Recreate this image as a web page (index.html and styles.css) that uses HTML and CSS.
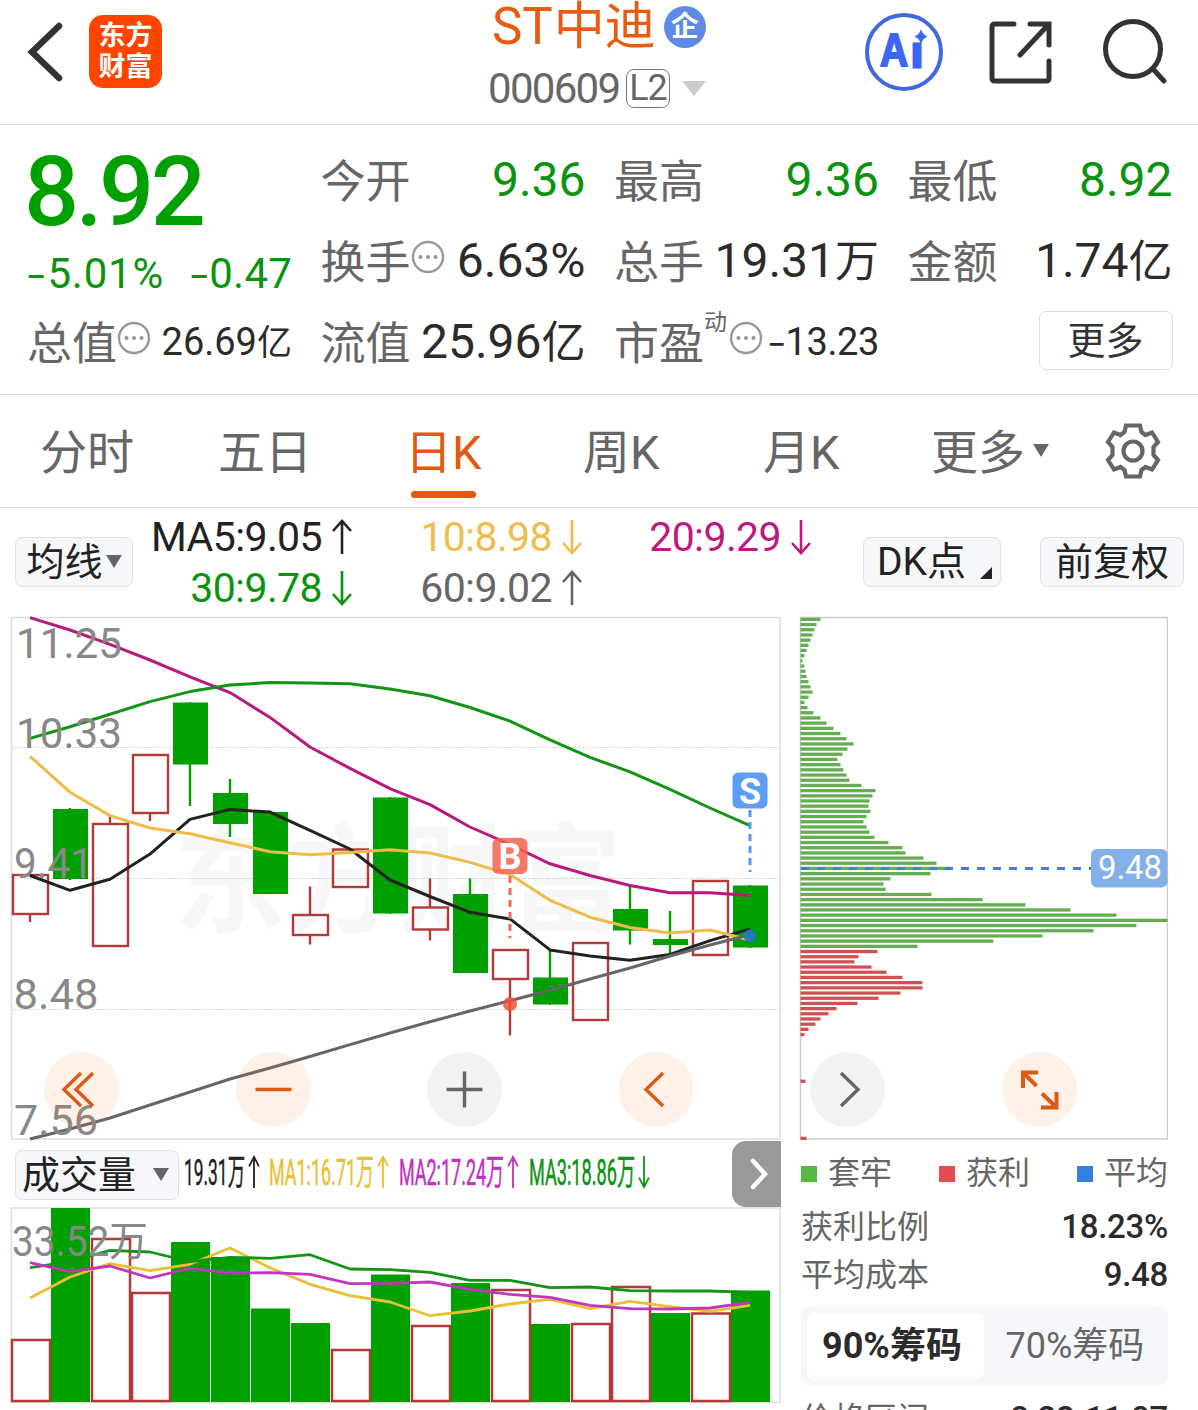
FILE: index.html
```
<!DOCTYPE html>
<html lang="zh-CN">
<head>
	<meta charset="utf-8">
	<title>ST中迪 000609</title>
	<link rel="stylesheet" href="styles.css">
</head>
<body>

<svg class="defs">
	<symbol id="up" viewBox="0 0 22 36" preserveAspectRatio="none"><path d="M11 35V2M2 12L11 2L20 12" vector-effect="non-scaling-stroke" /></symbol>
	<symbol id="down" viewBox="0 0 22 36" preserveAspectRatio="none"><path d="M11 1V34M2 24L11 34L20 24" vector-effect="non-scaling-stroke" /></symbol>
	<symbol id="dots" viewBox="0 0 34 34">
		<circle cx="17" cy="17" r="15" fill="none" stroke="#999" stroke-width="2.4" />
		<circle cx="9.5" cy="17" r="2.1" fill="#999" /><circle cx="17" cy="17" r="2.1" fill="#999" /><circle cx="24.5" cy="17" r="2.1" fill="#999" />
	</symbol>
</svg>

<header class="header">
	<svg class="back" width="40" height="64" viewBox="0 0 40 64"><path d="M35 8L8 34L35 60" /></svg>
	<div class="logo"><span>东方</span><span>财富</span></div>
	<div class="title">
		<div class="name"><span>ST<em>中迪</em></span><i class="qi">企</i></div>
		<div class="code"><span class="num">000609</span><span class="l2">L2</span><i class="tri"></i></div>
	</div>
	<div class="tools">
		<svg width="80" height="80" viewBox="0 0 80 80">
			<circle cx="40" cy="40" r="37" fill="none" stroke="#4068e0" stroke-width="4" />
			<text class="ai" x="16" y="54" textLength="28" lengthAdjust="spacingAndGlyphs">A</text>
			<text class="ai dotless" x="47" y="55">ı</text>
			<path d="M57 17Q58.500 22.500 63.500 24.500Q58.500 26.500 57 32Q55.500 26.500 50.500 24.500Q55.500 22.500 57 17Z" fill="#3a66f5" />
		</svg>
		<svg class="line" width="66" height="66" viewBox="0 0 66 66"><path d="M27 6H8Q5 6 5 9V60Q5 63 8 63H59Q62 63 62 60V43M43 6H62V27M61 7L33 37" /></svg>
		<svg class="line" width="68" height="68" viewBox="0 0 68 68"><circle cx="32" cy="32" r="27.500" /><path d="M52 52L63 64" /></svg>
	</div>
</header>

<section class="quote">
	<div class="col first">
		<div class="price">8.92</div>
		<div class="change"><span><b>-</b>5.01%</span><span><b>-</b>0.47</span></div>
		<div class="item small"><label>总值</label><svg class="dots"><use href="#dots" /></svg><span>26.69<em>亿</em></span></div>
	</div>
	<div class="col">
		<div class="item"><label>今开</label><span class="green">9.36</span></div>
		<div class="item"><label>换手</label><svg class="dots"><use href="#dots" /></svg><span>6.63%</span></div>
		<div class="item"><label>流值</label><span>25.96<em>亿</em></span></div>
	</div>
	<div class="col">
		<div class="item"><label>最高</label><span class="green">9.36</span></div>
		<div class="item"><label>总手</label><span>19.31<em>万</em></span></div>
		<div class="item small"><label>市盈</label><sup>动</sup><svg class="dots"><use href="#dots" /></svg><span class="pe"><b>-</b>13.23</span></div>
	</div>
	<div class="col">
		<div class="item"><label>最低</label><span class="green">8.92</span></div>
		<div class="item"><label>金额</label><span>1.74<em>亿</em></span></div>
		<div class="item last"><button class="more">更多</button></div>
	</div>
</section>

<nav class="tabs">
	<a>分时</a>
	<a>五日</a>
	<a class="on">日K</a>
	<a>周K</a>
	<a>月K</a>
	<a>更多<i class="tri"></i></a>
	<svg width="58" height="58" viewBox="0 0 58 58">
		<path d="M22 3.500H36L37.500 10L41.500 13L48 10.500L54 20L49.500 25V33L54 38L48 47.500L41.500 45L37.500 48L36 54.500H22L20.500 48L16.500 45L10 47.500L4 38L8.500 33V25L4 20L10 10.500L16.500 13L20.500 10Z" />
		<circle cx="29" cy="29" r="9.500" />
	</svg>
</nav>

<section class="ma">
	<button class="btn">均线<i class="tri"></i></button>
	<div class="values">
		<div class="black"><span>MA5:9.05</span><svg><use href="#up" /></svg></div>
		<div class="yellow"><span>10:8.98</span><svg><use href="#down" /></svg></div>
		<div class="pink"><span>20:9.29</span><svg><use href="#down" /></svg></div>
		<div class="green"><span>30:9.78</span><svg><use href="#down" /></svg></div>
		<div class="gray"><span>60:9.02</span><svg><use href="#up" /></svg></div>
	</div>
	<button class="btn dk">DK点<i class="corner"></i></button>
	<button class="btn">前复权</button>
</section>

<main class="main">
	<div class="left">
		<div class="kline">
			<svg id="kline" width="790" height="531" viewBox="0 0 790 531"></svg>
			<div class="ctrl">
				<svg viewBox="0 0 75 75"><path d="M37 21L20 37.500L37 54M49 21L32 37.500L49 54" /></svg>
				<svg viewBox="0 0 75 75"><path d="M19.500 37.500H55.500" /></svg>
				<svg class="dim" viewBox="0 0 75 75"><path d="M19.500 37.500H55.500M37.500 19.500V55.500" /></svg>
				<svg viewBox="0 0 75 75"><path d="M44 21L27 37.500L44 54" /></svg>
			</div>
		</div>
		<div class="volbar">
			<button class="btn">成交量<i class="tri"></i></button>
			<svg width="480" height="60" viewBox="180 1143 480 60" id="voltext"></svg>
			<div class="next"><svg width="20" height="32" viewBox="0 0 20 32"><path d="M4 3L16 16L4 29" /></svg></div>
		</div>
		<svg id="vol" width="790" height="203" viewBox="0 67 790 203"></svg>
	</div>
	<div class="right">
		<div class="chips">
			<svg id="chips" width="378" height="531" viewBox="0 0 378 531"></svg>
			<div class="ctrl">
				<svg class="dim" viewBox="0 0 75 75"><path d="M31 21L48 37.500L31 54" /></svg>
				<svg class="expand" viewBox="0 0 75 75"><path d="M36 20.500H21V36M21 20.500L34.500 34M40 41.500L54.500 55.500M54.500 40V55.500H39" /></svg>
			</div>
		</div>
		<div class="legend">
			<span><i class="g"></i>套牢</span>
			<span><i class="r"></i>获利</span>
			<span><i class="b"></i>平均</span>
		</div>
		<div class="row"><span>获利比例</span><strong>18.23%</strong></div>
		<div class="row"><span>平均成本</span><strong>9.48</strong></div>
		<div class="switch"><a class="on">90%筹码</a><a>70%筹码</a></div>
		<div class="row range"><span>价格区间</span><strong>8.22-11.07</strong></div>
	</div>
</main>

<script src="script.js"></script>
</body>
</html>
```
FILE: styles.css
```
* {
	box-sizing: border-box;
}
body {
	margin: 0;
	width: 1198px;
	height: 1410px;
	overflow: hidden;
	background: #fff;
	color: #333;
	font-family: Roboto, "Noto Sans CJK SC", sans-serif;
	white-space: nowrap;
}
i, em {
	font-style: normal;
}
b {
	display: inline-block;
	margin-right: 3px;
	font-weight: normal;
	font-family: "Noto Sans CJK SC", sans-serif;
	line-height: 0;
	transform: scaleX(1.4);
}
button {
	padding: 0;
	color: #222;
	font-family: inherit;
}
.defs {
	display: none;
}
.tri {
	display: inline-block;
	border: 8px solid transparent;
	border-top: 13px solid #666;
	border-bottom: 0;
}
.green { color: #0a930f; }
.black { color: #222; }
.yellow { color: #f0bc4e; }
.pink { color: #c0187f; }
.gray { color: #666; }

/* 顶部 */
.header {
	display: flex;
	height: 125px;
	border-bottom: 1px solid #dcdcdc;
}
.back {
	margin: 18px 0 0 24px;
	fill: none;
	stroke: #333;
	stroke-width: 6.500;
	stroke-linecap: round;
}
.logo {
	display: flex;
	flex-direction: column;
	justify-content: center;
	align-items: center;
	width: 73px;
	height: 73px;
	margin: 15px 0 0 25px;
	border-radius: 14px;
	background: #ff4400;
	color: #fff;
	font-weight: bold;
	font-size: 27px;
	line-height: 31px;
}
.title {
	width: 220px;
	margin-left: 326px;
}
.name {
	display: flex;
	align-items: center;
	height: 54px;
	color: #ea5a10;
	font-size: 51px;
	line-height: 54px;
	gap: 8px;
	margin-left: 4px;
}
.name em {
	margin-left: 1px;
	font-size: 51px;
	line-height: 0;
}
.qi {
	width: 42px;
	height: 42px;
	border-radius: 50%;
	background: #5d8be6;
	color: #fff;
	font-size: 28px;
	font-weight: bold;
	line-height: 41px;
	text-align: center;
}
.code {
	display: flex;
	align-items: center;
	height: 60px;
	margin-top: 4px;
	color: #666;
	font-size: 42px;
}
.code .num {
	width: 138px;
	letter-spacing: -1.700px;
}
.l2 {
	width: 44px;
	height: 39px;
	border: 1.500px solid #777;
	border-radius: 8px;
	font-size: 36px;
	line-height: 37px;
	text-align: center;
	letter-spacing: -1px;
}
.code .tri {
	margin-left: 12px;
	border-width: 15px 12px 0;
	border-top-color: #ccc;
}
.tools {
	display: flex;
	margin-left: 156px;
}
.tools svg:nth-child(1) { margin-top: 12px; }
.tools svg:nth-child(2) { margin: 18px 0 0 43px; }
.tools svg:nth-child(3) { margin: 17px 0 0 48px; }
.ai {
	fill: #3a66f5;
	stroke: #3a66f5;
	stroke-width: 2;
	font: bold 46px "Liberation Sans", sans-serif;
}
.dotless {
	font-size: 43px;
	stroke-width: 3;
}
.line {
	fill: none;
	stroke: #333;
	stroke-width: 5;
	stroke-linecap: round;
}

/* 行情 */
.quote {
	display: grid;
	grid-template-columns: repeat(4, 266px);
	column-gap: 27.500px;
	height: 270px;
	padding: 14px 0 0 26px;
	border-bottom: 1px solid #dcdcdc;
}
.price {
	height: 105px;
	margin-left: -2px;
	color: #00a000;
	font-size: 97px;
	font-weight: 500;
	line-height: 107px;
	letter-spacing: -3.500px;
}
.change {
	display: flex;
	justify-content: space-between;
	height: 57px;
	color: #0a930f;
	font-size: 42px;
	line-height: 59px;
	letter-spacing: .2px;
}
.change span:first-child {
	padding-left: 3px;
	letter-spacing: .8px;
}
.item {
	display: flex;
	align-items: center;
	height: 81px;
	font-size: 48px;
	color: #2b2b2b;
}
.item label {
	margin: -3px -1px 0 1px;
	color: #666;
	font-size: 45px;
}
.item span {
	margin-left: auto;
}
.item em {
	font-size: 44px;
	line-height: 0;
}
.item .green {
	color: #0a930f;
}
.small {
	font-size: 38px;
}
.small em {
	font-size: 35px;
}
.item .pe {
	letter-spacing: -.4px;
}
.dots {
	width: 34px;
	height: 34px;
	margin: -8px 0 0 1px;
}
.item sup {
	align-self: flex-start;
	margin: 8px 0 0 1px;
	color: #666;
	font-size: 23px;
	line-height: 28px;
}
.item sup + .dots {
	margin-left: 2px;
}
.more {
	width: 134px;
	height: 59px;
	margin: -2px 0 0 132px;
	border: 1px solid #dedede;
	border-radius: 7px;
	background: #fff;
	color: #333;
	font-size: 38px;
	line-height: 54px;
}

/* 周期 */
.tabs {
	display: grid;
	grid-template-columns: 178px 187px 178px 180px 168px 173px 58px;
	height: 113px;
	padding-left: 40px;
	border-bottom: 1px solid #dcdcdc;
	color: #666;
	font-size: 47px;
	line-height: 116px;
}
.tabs .on {
	display: flex;
	flex-direction: column;
	color: #e2590f;
}
.tabs .on::after {
	content: "";
	width: 65px;
	height: 7px;
	margin: -20px 0 0 6px;
	border-radius: 4px;
	background: #e2590f;
}
.tabs .tri {
	margin: 0 0 12px 8px;
}
.tabs svg {
	margin-top: 27px;
	fill: none;
	stroke: #666;
	stroke-width: 4.200;
}

/* 均线 */
.ma {
	display: flex;
	align-items: flex-start;
	height: 102px;
	padding: 29px 0 0 15px;
}
.btn {
	width: 118px;
	height: 50px;
	border: 1px solid #dfe1e4;
	border-radius: 7px;
	background: #f6f7fa;
	font-size: 38px;
	line-height: 46px;
}
.btn .tri {
	margin: 0 0 7px 3px;
}
.ma .btn {
	width: 144px;
}
.ma .btn:first-child {
	width: 118px;
}
.ma .dk {
	width: 138px;
	margin: 0 39px 0 51px;
	text-align: left;
	padding-left: 13px;
	font-size: 39px;
}
.corner {
	display: inline-block;
	margin: 0 0 -4px 14px;
	border: 6px solid #222;
	border-top-color: transparent;
	border-left-color: transparent;
}
.values {
	display: grid;
	grid-template-columns: 220px 230px 229px;
	grid-auto-rows: 51px;
	margin-top: -26px;
	font-size: 41px;
}
.values div {
	display: flex;
	justify-content: flex-end;
	align-items: center;
	gap: 9px;
	letter-spacing: -.6px;
}
.values svg {
	width: 22px;
	height: 36px;
	fill: none;
	stroke: currentColor;
	stroke-width: 2.600;
}

/* 图表 */
.main {
	display: flex;
}
.main svg {
	display: block;
}
.left, .right {
	width: 790px;
}
.right {
	width: 378px;
}
.kline, .chips {
	position: relative;
	height: 531px;
}
.ctrl {
	position: absolute;
	left: 44px;
	top: 442px;
	display: flex;
	gap: 116.600px;
}
.chips .ctrl {
	left: 20px;
}
.ctrl svg {
	width: 75px;
	height: 75px;
	border-radius: 50%;
	background: rgba(255, 120, 50, .11);
	fill: none;
	stroke: #dc5a14;
	stroke-width: 3.400;
}
.ctrl .dim {
	background: #f2f2f2;
	stroke: #666;
}
.ctrl .expand {
	stroke-width: 4;
}
.volbar {
	display: flex;
	height: 66px;
}
.volbar .btn {
	width: 164px;
	margin: 9px 0 0 15px;
	padding-left: 6px;
	text-align: left;
}
.volbar .btn .tri {
	margin-left: 17px;
}
.next {
	display: flex;
	align-items: center;
	justify-content: center;
	width: 49px;
	margin-left: 73px;
	padding-left: 4px;
	border-radius: 14px 0 0 14px;
	background: #999;
}
.next path {
	fill: none;
	stroke: #fff;
	stroke-width: 4.500;
	stroke-linecap: round;
}
.axis {
	fill: #888;
	font-size: 42px;
}
.water {
	fill: #f7f7f7;
	font-size: 118px;
	font-weight: bold;
}
.mark {
	fill: #fff;
	font: bold 36px Roboto, sans-serif;
	text-anchor: middle;
}
.tip {
	fill: #fff;
	font-size: 33px;
}

/* 筹码 */
.legend {
	display: flex;
	justify-content: space-between;
	height: 61px;
	padding-left: 11px;
	color: #666;
	font-size: 32px;
	line-height: 65px;
}
.legend i {
	display: inline-block;
	width: 16px;
	height: 16px;
	margin: 0 11px 2px 0;
	vertical-align: baseline;
}
.legend .g { background: #57b845; }
.legend .r { background: #e64c4c; }
.legend .b { background: #347fe0; }
.row {
	display: flex;
	justify-content: space-between;
	height: 48px;
	padding-left: 11px;
	color: #666;
	font-size: 32px;
	line-height: 50px;
}
.row strong {
	color: #2b2b2b;
	font-size: 33px;
	font-weight: 500;
	line-height: 49px;
	letter-spacing: -.3px;
}
.switch {
	display: flex;
	height: 78px;
	margin: 9px 0 7px 11px;
	padding: 6px;
	border-radius: 8px;
	background: #f6f7fa;
	color: #666;
	font-size: 36px;
	line-height: 67px;
}
.switch a {
	width: 178px;
	height: 66px;
	padding-left: 21px;
	border-radius: 7px;
}
.switch .on {
	padding-left: 15px;
	background: #fff;
	color: #2b2b2b;
	font-weight: bold;
}
.range {
	padding-top: 2px;
}
```
FILE: script.js
```
function $(id) {
	return document.getElementById(id);
}

var RED = '#b23a38', GREEN = '#00a000';

// x位置：第i根K线的中心
function cx(i) {
	return 30 + i * 40;
}

function line(ys, color, w) {
	var pts = ys.map(function (y, i) { return cx(i) + ',' + y; }).join(' ');
	return '<polyline points="' + pts + '" fill="none" stroke="' + color + '" stroke-width="' + (w || 3) + '" stroke-linejoin="round"/>';
}

function rect(x, y, w, h, fill, more) {
	return '<rect x="' + x + '" y="' + y + '" width="' + w + '" height="' + h + '" fill="' + fill + '" ' + (more || '') + '/>';
}

function text(x, y, len, str, cls, more) {
	return '<text x="' + x + '" y="' + y + '" textLength="' + len + '" lengthAdjust="spacingAndGlyphs" class="' + cls + '" ' + (more || '') + '>' + str + '</text>';
}

function seg(x1, y1, x2, y2, color, more) {
	return '<line x1="' + x1 + '" y1="' + y1 + '" x2="' + x2 + '" y2="' + y2 + '" stroke="' + color + '" ' + (more || '') + '/>';
}

// [涨跌, 实体上, 实体下, 影线上, 影线下]
var candles = [
	[1, 265, 304, 265, 312], [0, 199, 269, 198, 270], [1, 214, 336, 205, 336],
	[1, 145, 203, 145, 211], [0, 92.5, 154.5, 92, 196], [0, 183, 214, 169, 227],
	[0, 202, 284, 200.5, 284], [1, 305, 325, 276.5, 334.5], [1, 239.5, 277, 239, 277],
	[0, 187.5, 303.5, 187, 304], [1, 297.5, 319.5, 268.5, 330.5], [0, 284, 363, 268.5, 363],
	[1, 340, 369, 340, 425.5], [0, 367.5, 394.5, 341, 395], [1, 333, 410, 333, 411],
	[0, 299, 320.5, 276.5, 334.5], [0, 329, 335, 301, 344], [1, 271, 345, 271, 345],
	[0, 275.5, 337.5, 275, 338]
];
var ma5 = [265.5, 280.3, 269.3, 244.1, 209.4, 199.4, 202.1, 220.4, 239, 270, 286.5, 302.3, 308.9, 339.9, 346, 350.2, 344.4, 330.6, 318.9];
var ma10 = [146.3, 182.2, 205.6, 218, 223.8, 232.8, 241.7, 244.8, 242.4, 239.7, 243, 252.4, 264.5, 290.3, 307.2, 317.5, 323, 320, 330];
var ma20 = [7.6, 20, 34.4, 50, 66.8, 82.6, 107.4, 137, 158.4, 178.7, 194.6, 217, 234.5, 253.8, 265.5, 275.5, 282.7, 282.7, 285.5];
var ma30 = [128.4, 116.7, 104.3, 91.6, 81.6, 75, 72.6, 73, 73.7, 79, 85.7, 97.5, 111.2, 129.8, 147.4, 161.8, 179.4, 198, 215.6];
var ma60 = [529, 519, 508, 495, 482, 469, 458, 446.5, 434.6, 423, 411.8, 401, 390.8, 380.2, 369, 358, 346, 335, 324.7];

function drawKline() {
	var s = rect(11.5, 7.5, 768.5, 521.5, 'none', 'stroke="#dedede" stroke-width="1.5"');
	s += text(174, 313, 448, '东方财富', 'water');
	[137.5, 268.5, 399.5].forEach(function (y) {
		s += seg(12, y, 780, y, '#ccc', 'stroke-dasharray="1.5 1.5"');
	});
	candles.forEach(function (c, i) {
		var x = cx(i);
		if (c[0]) {
			s += seg(x, c[3], x, c[1], RED, 'stroke-width="2.4"') + seg(x, c[2], x, c[4], RED, 'stroke-width="2.4"');
			s += rect(x - 17, c[1], 35, c[2] - c[1], 'none', 'stroke="' + RED + '" stroke-width="2.4"');
		} else {
			s += seg(x, c[3], x, c[4], GREEN, 'stroke-width="2.4"');
			s += rect(x - 17, c[1], 35, c[2] - c[1], GREEN);
		}
	});
	s += line(ma5, '#222') + line(ma10, '#efbb4c') + line(ma20, '#b8197c') + line(ma30, '#149414') + line(ma60, '#666');
	s += text(16, 47.5, 106, '11.25', 'axis') + text(16, 137.5, 106, '10.33', 'axis') + text(14, 268, 79, '9.41', 'axis');
	s += text(13.5, 399, 85, '8.48', 'axis') + text(14, 525, 84, '7.56', 'axis');
	// 买卖点
	s += seg(510, 266, 510, 328, '#f06a5c', 'stroke-width="3" stroke-dasharray="7 5"') + '<circle cx="510" cy="394" r="7" fill="#f0503f" opacity=".85"/>';
	s += rect(492.5, 228, 35, 36, '#f4614f', 'rx="6" opacity=".85"') + '<text x="510" y="259" class="mark">B</text>';
	s += seg(750, 200, 750, 262, '#5797ee', 'stroke-width="3" stroke-dasharray="7 5"') + '<circle cx="750" cy="326" r="6.5" fill="#1f78c8" opacity=".9"/>';
	s += rect(732.5, 162.5, 35, 36, '#5c9df5', 'rx="6"') + '<text x="750" y="193.500" class="mark">S</text>';
	$('kline').innerHTML = s;
}

// 成交量 [涨跌, 顶部]
var vols = [[1, 200], [0, 68], [1, 99], [1, 153], [0, 102], [0, 117], [0, 168.5], [0, 183], [1, 210], [0, 134.5], [1, 186], [0, 143], [1, 150], [0, 184], [1, 184], [1, 147], [0, 173], [1, 173.5], [0, 150.5]];
var vma1 = [158, 137, 123.7, 130.7, 124.3, 108, 127.7, 144.3, 155.7, 162, 175.7, 171, 164, 159.3, 168.7, 161.3, 166.7, 171.3, 165.3];
var vma2 = [122.7, 131.7, 126, 138, 128.3, 133, 132.7, 134.3, 143.7, 143.3, 142, 149.3, 154.3, 157.3, 165.3, 168.7, 169, 168, 162.3];
var vma3 = [127.7, 121.7, 110.3, 112, 121.7, 117.3, 118.3, 114.7, 129, 129.7, 132.3, 140.3, 140.3, 147.7, 147, 150.7, 151, 151, 152.3];

function drawVol() {
	var s = rect(11.5, 68, 768.5, 194.5, 'none', 'stroke="#dedede" stroke-width="1.5"');
	vols.forEach(function (v, i) {
		var x = 11 + i * 40;
		if (v[0]) {
			s += rect(x + 1, v[1], 38, 261 - v[1], '#fff', 'stroke="' + RED + '" stroke-width="2.5"');
		} else {
			s += rect(x, v[1], 39, 262 - v[1], GREEN);
		}
	});
	s += line(vma1, '#e8bf35', 2.8) + line(vma3, '#149414', 2.8) + line(vma2, '#c236bc', 2.8);
	s += text(12, 115.5, 136, '33.52万', 'axis');
	$('vol').innerHTML = s;

	// 文字横向压缩
	s = '';
	[[185, 61, '19.31万', '#222', 1], [270, 105, 'MA1:16.71万', '#e8bf35', 1], [400, 105, 'MA2:17.24万', '#c030c0', 1], [530, 106, 'MA3:18.86万', '#0a930f', 0]].forEach(function (t) {
		s += text(0, 0, t[1] / 0.52, t[2], '', 'transform="translate(' + t[0] + ' 1187) scale(.52 1)" fill="' + t[3] + '" stroke="' + t[3] + '" stroke-width=".5" font-size="36"');
		s += '<use href="#' + (t[4] ? 'up' : 'down') + '" x="' + (t[0] + t[1] + 3) + '" y="1157" width="12" height="34" fill="none" stroke="' + t[3] + '" stroke-width="1.8"/>';
	});
	$('voltext').innerHTML = s;
}

// 筹码分布，从高价到低价
var trapped = [20, 16, 14, 12, 10, 8, 6, 4, 2, 4, 5, 6, 8, 10, 12, 8, 4, 7, 13, 20, 26, 33, 40, 46, 53, 47, 42, 37, 40, 43, 46, 49, 61, 75, 72, 69, 68, 70, 66, 63, 66, 69, 74, 88, 102, 105, 123, 136, 150, 130, 90, 83, 85, 131, 182, 225, 270, 316, 367, 336, 293, 242, 193, 117];
var profit = [77, 58, 54, 71, 86, 102, 122, 122, 100, 78, 57, 36, 28, 20, 15, 8, 4, 0, 0, 0, 0, 0, 0, 0, 0, 5, 0, 0, 0, 0, 0, 0, 0, 0, 0, 0, 6];

function drawChips() {
	var s = rect(10.5, 7.5, 367, 521.5, 'none', 'stroke="#ccc" stroke-width="1.5"');
	trapped.concat(profit).forEach(function (w, i) {
		s += rect(10.5, (7.7 + i * 5.19).toFixed(1), w, 3.3, i < trapped.length ? '#65ad52' : '#cf5252');
	});
	s += seg(11, 258.5, 301, 258.5, '#3f80cc', 'stroke-width="3.2" stroke-dasharray="8 8"');
	s += rect(301, 239, 76.5, 38.5, '#84b0ea', 'rx="6"');
	s += text(308, 269, 64, '9.48', 'tip');
	$('chips').innerHTML = s;
}

drawKline();
drawVol();
drawChips();
```
